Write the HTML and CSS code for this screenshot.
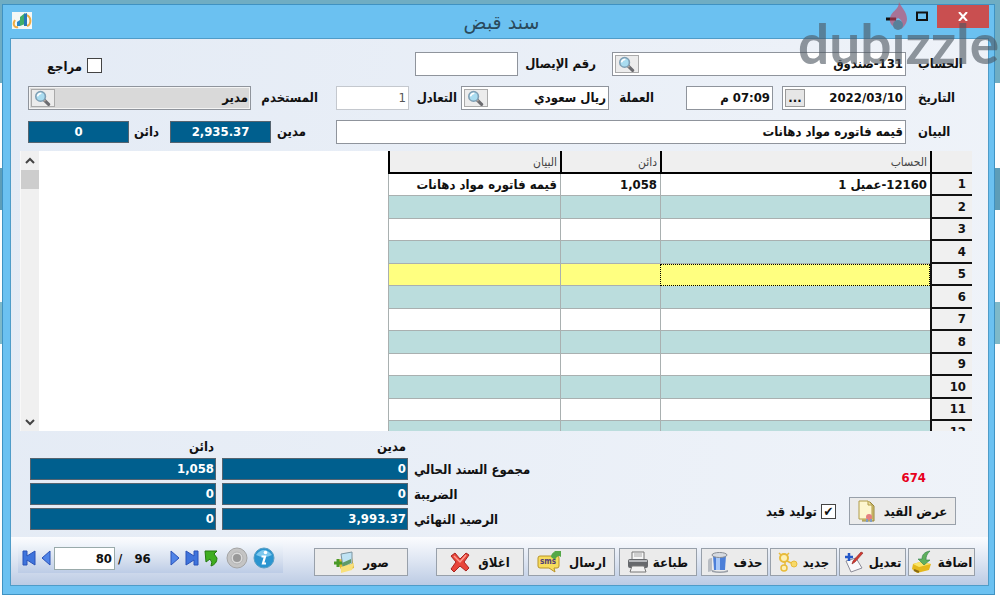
FILE: index.html
```html
<!DOCTYPE html>
<html lang="ar" dir="rtl">
<head>
<meta charset="utf-8">
<title>سند قبض</title>
<link rel="stylesheet" href="styles.css">
</head>
<body>
<svg class="defs" aria-hidden="true">
  <symbol id="lens" viewBox="0 0 24 20">
    <path d="M13 12l6 6" stroke="#6c6c70" stroke-width="4" stroke-linecap="round"/>
    <path d="M12 11l3 3" stroke="#b9a79b" stroke-width="2"/>
    <circle cx="9" cy="8" r="6" fill="#a9dcf0" stroke="#7f9fb4" stroke-width="2"/>
    <path d="M5 8q1-4 5-4" stroke="#fff" stroke-width="2" fill="none"/>
  </symbol>
</svg>
<div class="window">
  <header class="titlebar">
    <div class="controls">
      <button class="close" aria-label="إغلاق"><svg width="10" height="9" viewBox="0 0 10 9"><path d="M1 0l8 9M9 0L1 9" stroke="#fff" stroke-width="2"/></svg></button>
      <button class="ctl" aria-label="تكبير"><svg width="12" height="10" viewBox="0 0 12 10"><path d="M1 1.500h10v7.500H1z" fill="none" stroke="#111" stroke-width="2"/></svg></button>
      <button class="ctl" aria-label="تصغير"><svg width="12" height="10" viewBox="0 0 12 10"><path d="M1 8h10" stroke="#111" stroke-width="3"/></svg></button>
    </div>
    <h1>سند قبض</h1>
    <div class="applogo"><svg width="20" height="17" viewBox="0 0 20 17"><rect width="20" height="17" fill="#f4f8f6"/><path d="M3 8C0 13 3 16 6 15M15 3c5 3 4 10 0 11" fill="none" stroke="#f0ac42" stroke-width="2"/><path d="M5 10l3-2v6H5z" fill="#2a87c4"/><path d="M8 5l5-4v11l-5 2z" fill="#3fae6a"/><path d="M12 2l3-1v13h-3z" fill="#2678b8"/></svg></div>
  </header>

  <main class="client">
    <form class="head">
      <div class="side main-side">
        <div class="row">
          <label class="first" for="acc">الحساب</label>
          <div class="field grow"><input id="acc" value="131-صندوق"><button type="button" class="lens" aria-label="بحث"><svg><use href="#lens"/></svg></button></div>
          <label class="wide" for="rec">رقم الإيصال</label>
          <div class="field receipt"><input id="rec"></div>
        </div>
        <div class="row">
          <label class="first" for="date">التاريخ</label>
          <div class="field date"><input id="date" value="2022/03/10"><button type="button" class="dots">...</button></div>
          <div class="field time"><input aria-label="الوقت" value="07:09 م"></div>
          <label class="cur" for="cur">العملة</label>
          <div class="field grow"><input id="cur" value="ريال سعودي"><button type="button" class="lens" aria-label="بحث"><svg><use href="#lens"/></svg></button></div>
          <label class="rate" for="rate">التعادل</label>
          <div class="field ratebox"><input id="rate" value="1"></div>
        </div>
        <div class="row">
          <label class="first" for="desc">البيان</label>
          <div class="field grow"><input id="desc" value="قيمه فاتوره مواد دهانات"></div>
        </div>
      </div>
      <div class="side user-side">
        <div class="row check-row"><input type="checkbox" id="rev"><label for="rev">مراجع</label></div>
        <div class="row">
          <label class="user" for="user">المستخدم</label>
          <div class="field grow grey"><input id="user" value="مدير"><button type="button" class="lens" aria-label="بحث"><svg><use href="#lens"/></svg></button></div>
        </div>
        <div class="row sums">
          <label for="deb">مدين</label><output class="blue center" id="deb">2,935.37</output>
          <label for="cre">دائن</label><output class="blue center" id="cre">0</output>
        </div>
      </div>
    </form>

    <section class="sheet">
      <table>
        <colgroup><col class="c-num"><col class="c-acc"><col class="c-cre"><col class="c-desc"></colgroup>
        <thead><tr><th></th><th>الحساب</th><th>دائن</th><th>البيان</th></tr></thead>
        <tbody>
          <tr><th>1</th><td>12160-عميل 1</td><td>1,058</td><td>قيمه فاتوره مواد دهانات</td></tr>
          <tr><th>2</th><td></td><td></td><td></td></tr>
          <tr><th>3</th><td></td><td></td><td></td></tr>
          <tr><th>4</th><td></td><td></td><td></td></tr>
          <tr class="current"><th>5</th><td class="focus"></td><td></td><td></td></tr>
          <tr><th>6</th><td></td><td></td><td></td></tr>
          <tr><th>7</th><td></td><td></td><td></td></tr>
          <tr><th>8</th><td></td><td></td><td></td></tr>
          <tr><th>9</th><td></td><td></td><td></td></tr>
          <tr><th>10</th><td></td><td></td><td></td></tr>
          <tr><th>11</th><td></td><td></td><td></td></tr>
          <tr><th>12</th><td></td><td></td><td></td></tr>
        </tbody>
      </table>
      <div class="scroll">
        <button aria-label="أعلى"><svg width="10" height="8" viewBox="0 0 10 8"><path d="M1 6l4-4 4 4" fill="none" stroke="#444" stroke-width="2"/></svg></button>
        <div class="thumb"></div>
        <button class="down" aria-label="أسفل"><svg width="10" height="8" viewBox="0 0 10 8"><path d="M1 2l4 4 4-4" fill="none" stroke="#444" stroke-width="2"/></svg></button>
      </div>
    </section>

    <section class="bottom">
      <div class="entry">
        <span class="red">674</span>
        <div class="entry-row">
          <button class="btn show">عرض القيد<svg width="18" height="22" viewBox="0 0 18 22"><path d="M3 2h9l4 4v15H4" fill="#d8c878" stroke="#97853c"/><path d="M1 1h9l4 4v14H1z" fill="#fdf6cf" stroke="#b09b48"/><path d="M10 1v4h4" fill="#efe2a0" stroke="#b09b48"/><circle cx="11" cy="17" r="3" fill="#e58080"/><path d="M9 19v3M13 19v3" stroke="#7f9dc4" stroke-width="2"/></svg></button>
          <input type="checkbox" id="gen" checked><label for="gen">توليد قيد</label>
        </div>
      </div>
      <div class="totals">
        <span></span><span class="th">مدين</span><span class="th">دائن</span>
        <span>مجموع السند الحالي</span><output class="blue">0</output><output class="blue">1,058</output>
        <span>الضريبة</span><output class="blue">0</output><output class="blue">0</output>
        <span>الرصيد النهائي</span><output class="blue">3,993.37</output><output class="blue">0</output>
      </div>
    </section>

    <footer class="toolbar">
      <div class="actions">
        <button class="btn">اضافة<svg width="22" height="24" viewBox="0 0 22 24"><path d="M2 14l7-2 11 2-2 6-12 3-5-4z" fill="#e4b81c"/><path d="M2 14l7-2 11 2-12 3z" fill="#fbe568"/><path d="M3 20l5 2" stroke="#8a6b10" stroke-width="2"/><path d="M19 1c-6 1-8 4-8 8H7l6 6 6-5h-4c0-4 1-6 4-9z" fill="#5fb05c" stroke="#2f7f4e" stroke-width=".6"/></svg></button>
        <button class="btn">تعديل<svg width="20" height="22" viewBox="0 0 20 22"><path d="M2 10l10-3 6 10-11 4z" fill="#f9f9fb" stroke="#8c8c98"/><path d="M19 2l-8 9-3 2 1-3 8-9z" fill="#d43a30" stroke="#8c2020" stroke-width=".6"/><path d="M5 2v8M1 6h8" stroke="#2458c8" stroke-width="2.500"/></svg></button>
        <button class="btn">جديد<svg width="20" height="20" viewBox="0 0 20 20"><circle cx="6" cy="6" r="4" fill="#fdf0b4" stroke="#e8bb3a" stroke-width="2"/><circle cx="16" cy="12" r="3" fill="#f8d968" stroke="#e8bb3a" stroke-width="1"/><circle cx="6" cy="16" r="3" fill="#fdf0b4" stroke="#e8bb3a" stroke-width="1.500"/><path d="M9 9l4 2M7 10v3M1 1l2 2M11 1L9 3" stroke="#e8bb3a" stroke-width="1.500"/></svg></button>
        <button class="btn">حذف<svg width="22" height="22" viewBox="0 0 22 22"><path d="M1 10q0-3 4-3v13l-4 1z" fill="#b8bcc2"/><path d="M6 4h13l-1 15H7z" fill="#4c7fd8"/><path d="M9 5h4v14H9z" fill="#a8c8f8"/><ellipse cx="12.500" cy="4" rx="7.500" ry="2.500" fill="#d6dae0" stroke="#878c94"/><path d="M5 19q8 3 16 0v2q-8 2-16 0z" fill="#9ba0a8"/></svg></button>
        <button class="btn print">طباعة<svg width="20" height="22" viewBox="0 0 20 22"><path d="M4 1h12v8H4z" fill="#f5f5f5" stroke="#777"/><path d="M6 3h8M6 5h8" stroke="#aaa"/><rect y="8" width="20" height="9" rx="2" fill="#66686c"/><path d="M1 10h18" stroke="#b5b7bb" stroke-width="2"/><path d="M4 15h12l2 6H2z" fill="#f2f2f2" stroke="#777"/></svg></button>
        <button class="btn send">ارسال<svg width="24" height="22" viewBox="0 0 24 22"><path d="M3 5h17q2 0 2 2v8q0 2-2 2h-3l1 4-6-4H3q-2 0-2-2V7q0-2 2-2z" fill="#f7dc5c" stroke="#b99428"/><path d="M14 6c0-3 2-5 4-5l-1-1h7v6l-2-1c-2 0-3 2-4 4z" fill="#55a848"/><text x="3" y="13" class="sms">sms</text></svg></button>
        <button class="btn exit">اغلاق<svg width="20" height="20" viewBox="0 0 20 20"><path d="M1 4l4-3 5 6 6-6 3 2-5 7 5 6-3 3-6-5-6 6-3-3 5-7z" fill="#e8453a" stroke="#a82420"/><path d="M4 4l6 6 6-7" stroke="#ff9d90" stroke-width="1.500" fill="none"/></svg></button>
        <button class="btn pics">صور<svg width="22" height="22" viewBox="0 0 22 22"><path d="M4 9l15-3 2 11-12 4z" fill="#e3b82a"/><path d="M8 3l11-2v12l-9 3z" fill="#bfe3f4" stroke="#7c94a0"/><path d="M9 12l9-4v4l-8 4z" fill="#5f9a68"/><path d="M8 16l13-4-2 7-11 3z" fill="#f8e07a"/><path d="M5 8v8M1 12h8" stroke="#4a9a28" stroke-width="3"/></svg></button>
      </div>
      <nav class="nav" dir="ltr">
        <button aria-label="الأول"><svg width="14" height="16" viewBox="0 0 14 16"><path d="M1 1h4v5l8-5v14l-8-5v5H1z" fill="#3f74dc" stroke="#2a52b8"/></svg></button>
        <button aria-label="السابق"><svg width="10" height="16" viewBox="0 0 10 16"><path d="M9 1v14L1 8z" fill="#4f84e8" stroke="#2a52b8"/></svg></button>
        <input aria-label="رقم السند" value="80">
        <span class="count">/ &nbsp; 96</span>
        <button aria-label="التالي"><svg width="10" height="16" viewBox="0 0 10 16"><path d="M1 1v14l8-7z" fill="#4f84e8" stroke="#2a52b8"/></svg></button>
        <button aria-label="الأخير"><svg width="14" height="16" viewBox="0 0 14 16"><path d="M13 1H9v5L1 1v14l8-5v5h4z" fill="#3f74dc" stroke="#2a52b8"/></svg></button>
        <button aria-label="رجوع"><svg width="14" height="17" viewBox="0 0 14 17"><path d="M1 1h12l-3 3 3 4q0 6-6 8 2-4-1-7l-4 3z" fill="#3fae20" stroke="#24790f"/></svg></button>
        <button class="rec" aria-label="تسجيل"><svg width="22" height="22" viewBox="0 0 22 22"><circle cx="11" cy="11" r="10" fill="#c4c4c4" stroke="#a4a4a4"/><circle cx="11" cy="11" r="6" fill="#dadada" stroke="#b4b4b4"/><circle cx="11" cy="11" r="4" fill="#989898"/></svg></button>
        <button aria-label="معلومات"><svg width="22" height="22" viewBox="0 0 22 22"><circle cx="11" cy="11" r="10" fill="#2b95d0" stroke="#5a9fc4"/><path d="M3 8q8-10 16 0-8 4-16 0z" fill="#7cc8ee"/><circle cx="12.500" cy="5.500" r="1.800" fill="#fff"/><path d="M8.500 9.500h3.500l-2 7h3" stroke="#fff" stroke-width="2.200" fill="none"/></svg></button>
      </nav>
    </footer>
  </main>
</div>
<div class="watermark" dir="ltr">dubızzle<svg width="20" height="28" viewBox="0 0 20 28"><path d="M11 0c2 5 8 10 8 17 0 4-3 8-6 10 2-6 1-9-3-11-3 2-4 6-2 10-4-2-7-5-6-10C3 9 11 8 11 0z" fill="#d0405c"/><circle cx="10" cy="23" r="5" fill="#4c5660"/></svg></div>
</body>
</html>
```
FILE: styles.css
```css
* { box-sizing: border-box; }
body {
  margin: 0;
  height: 100vh;
  padding: 4px 5px 5px 2px;
  font: bold 13px "DejaVu Sans Condensed", "DejaVu Sans", sans-serif;
  color: #111;
  background: linear-gradient(#6fadc3 0 83px, #fdfdfd 83px 168px, #5d9db8 168px 210px, #fdfdfd 210px 302px, #7eb9c9 302px 344px, #fdfdfd 344px);
  overflow: hidden;
}
button, input { font: inherit; color: inherit; margin: 0; }
button { padding: 0; border: 0; background: none; }
.defs { display: none; }
.window {
  height: 100%;
  display: flex;
  flex-direction: column;
  padding: 0 5px 8px 7px;
  background: #6bc1f1;
  border: 1px solid #3f92c2;
}
.titlebar { display: flex; align-items: flex-start; height: 33px; }
.titlebar > div { flex: 1; display: flex; }
.titlebar h1 { margin: 6px 0 0; font-size: 19px; font-family: "DejaVu Sans", sans-serif; line-height: 22px; font-weight: normal; color: #2a4a5c; }
.close { width: 52px; height: 23px; background: #c94f50; }
.ctl { width: 31px; height: 23px; }
.applogo { justify-content: flex-end; padding: 7px 2px; }
.client {
  flex: 1;
  min-height: 0;
  display: flex;
  flex-direction: column;
  background: linear-gradient(100deg, #e4ebf5, #eff3f9);
  border: 1px solid #4f9cc8;
}
.head { display: flex; gap: 18px; padding: 13px 20px 8px 17px; }
.side { display: flex; flex-direction: column; gap: 11px; }
.main-side { flex: 632; }
.user-side { flex: 290; }
.row { display: flex; align-items: center; height: 23px; }
.row label { white-space: nowrap; }
.row .first { width: 62px; display: flex; justify-content: flex-end; padding-left: 12px; }
.field { display: flex; height: 24px; background: #fff; border: 1px solid #8f949c; padding: 2px; }
.field input { flex: 1; width: 0; min-width: 0; border: 0; padding: 0; background: none; outline: 0; }
.grow { flex: 1; }
.lens { width: 24px; border: 1px solid #aaa; background: #ececec; }
.lens svg { width: 22px; height: 16px; display: block; }
.wide { width: 94px; padding-right: 16px; }
.receipt { width: 103px; margin-left: 79px; }
.date { width: 124px; }
.dots { width: 20px; border: 1px solid #999; background: #e6e6e6; line-height: 12px; }
.time { width: 87px; margin-right: 9px; }
.cur { width: 77px; padding-right: 32px; }
.rate { width: 52px; padding-right: 4px; }
.ratebox { width: 73px; border-color: #c4c8ce; font-weight: normal; color: #555; }
.grey { background: #d9d9d9; box-shadow: inset 0 0 0 1px #f4f4f4; }
.user { width: 67px; }
.check-row { justify-content: flex-end; gap: 5px; padding-left: 19px; }
.check-row input { margin-top: 4px; }
.check-row label { padding-top: 6px; }
input[type=checkbox] {
  appearance: none;
  width: 15px;
  height: 15px;
  background: #fff;
  border: 1px solid #444;
  display: grid;
  place-items: center;
}
input[type=checkbox]:checked::before { content: "✔"; font-size: 13px; line-height: 13px; }
.sums { padding-right: 12px; }
.sums label { width: 35px; }
.sums .blue { flex: 1; }
.sums .blue + label { padding-right: 11px; width: 41px; }
.blue { height: 22px; line-height: 19px; padding: 0 1px; color: #fff; background: #005f8e; border: 1px solid #556470; }
.center { text-align: center; }

.sheet { flex: 1; min-height: 0; display: flex; margin: 0 16px 0 9px; background: #fff; overflow: hidden; }
table { width: 61.3%; border-collapse: separate; border-spacing: 0; table-layout: fixed; align-self: flex-start; }
.c-num { width: 42px; }
.c-acc { width: 270px; }
.c-cre { width: 100px; }
th, td { height: 22px; padding: 0 3px; text-align: right; line-height: 16px; white-space: nowrap; }
tr:nth-child(even) > * { height: 23px; }
thead th { height: 23px; font-size: 12px; font-weight: normal; color: #444; background: #efefef; border-bottom: 2px solid #000; border-left: 2px solid #000; }
tbody th { padding: 0 6px; background: #f0f0f0; border-bottom: 2px solid #111; border-left: 2px solid #111; }
td { border-left: 1px solid #a9b0b0; border-bottom: 1px solid #a9b0b0; }
tr:nth-child(even) td { background: #bbdddd; }
tr.current td { background: #ffff80; }
tr.current .focus { border: 1px dotted #000; }
.scroll { margin-right: auto; width: 19px; display: flex; flex-direction: column; background: #f0f0f0; border-left: 1px solid #f8f8f8; }
.scroll button { height: 19px; }
.thumb { height: 19px; background: #cdcdcd; }
.down { margin-top: auto; }

.bottom { display: flex; justify-content: space-between; padding: 8px 32px 7px 19px; }
.entry { display: flex; flex-direction: column; padding-top: 31px; gap: 11px; }
.red { color: #e8001c; line-height: 16px; padding-right: 30px; }
.entry-row { display: flex; align-items: center; }
.entry-row input { margin: 0 13px 0 4px; }
.btn {
  display: flex;
  align-items: center;
  justify-content: center;
  gap: 5px;
  width: 67px;
  height: 28px;
  background: #ebebeb;
  border: 1px solid #98a0aa;
  white-space: nowrap;
}
.btn svg { flex: none; }
.show { width: 107px; gap: 8px; }
.totals { display: grid; grid-template-columns: 132px 186px 186px; gap: 3px 6px; align-items: center; }
.totals .th { line-height: 16px; padding-right: 2px; }
.totals > span { white-space: nowrap; }
.totals > span:not(.th) { text-align: left; }

.toolbar {
  display: flex;
  justify-content: space-between;
  align-items: flex-start;
  padding: 6px 13px 0 7px;
  height: 48px;
  background: linear-gradient(#fbfcfe, #dde5f2 50%, #bccbe4);
}
.actions { display: flex; gap: 2px; padding-top: 5px; }
.print { width: 78px; margin-right: 2px; }
.send { width: 87px; margin-right: 2px; }
.exit { width: 88px; margin-right: 2px; }
.pics { width: 94px; margin-right: 26px; gap: 8px; }
.btn.exit, .btn.send { gap: 8px; }
.sms { font: bold 8px "DejaVu Sans Condensed", sans-serif; fill: #503c78; direction: ltr; }
.nav {
  display: flex;
  align-items: center;
  gap: 5px;
  width: 265px;
  height: 30px;
  padding: 0 8px 0 4px;
  background: linear-gradient(#f3f7fc, #d4deee 60%, #bccce6);
}
.nav button svg { display: block; }
.nav input { width: 61px; height: 23px; margin: 0 -2px; border: 1px solid #9aa; padding: 0 2px; text-align: right; background: #fff; }
.nav .rec { margin-left: 3px; }
.count { flex: 1; white-space: pre; }
.watermark {
  position: absolute;
  top: 8px;
  left: 798px;
  font: bold 55px/70px Lato, sans-serif;
  color: #4c5660;
  opacity: .6;
  pointer-events: none;
}
.watermark svg { position: absolute; left: 90px; top: -6px; }
```
